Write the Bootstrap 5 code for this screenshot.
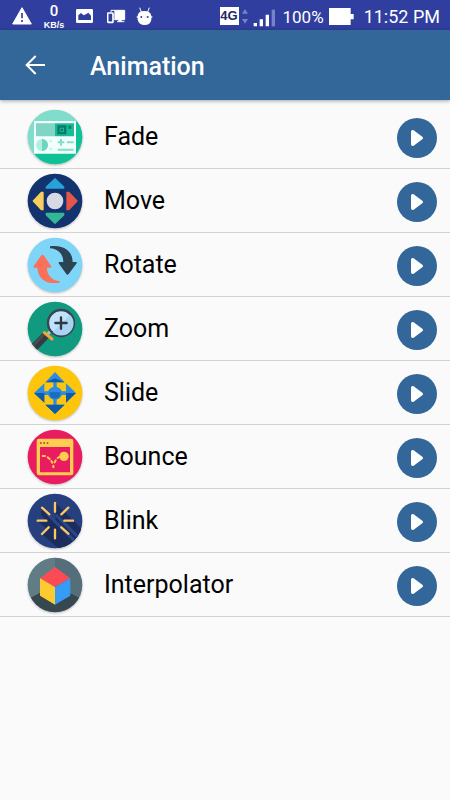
<!DOCTYPE html>
<html lang="en">
<head>
<meta charset="utf-8">
<meta name="viewport" content="width=device-width, initial-scale=1">
<title>Animation</title>
<link href="https://cdn.jsdelivr.net/npm/bootstrap@5.3.0/dist/css/bootstrap.min.css" rel="stylesheet">
<style>
body { background: #fafafa; color: #000; font-family: Roboto, "Liberation Sans", sans-serif; }
svg { display: block; flex: none; }
.status-bar { height: 30px; padding: 2px 10px 0 12px; background: #303f9f; color: #fff; font-size: 18px; line-height: 28px; }
.notices { gap: 10px; }
.net-speed { width: 24px; font-family: "Liberation Sans", sans-serif; font-weight: 700; font-size: 9px; line-height: 10px; }
.net-speed b { display: block; font-family: Roboto, sans-serif; font-weight: 500; font-size: 15px; line-height: 17px; }
.charge { font-size: 17px; margin: 0 5px 0 7px; padding-top: 1px; }
.clock { margin-left: 10px; padding-top: 1px; }
.net-type { width: 19px; height: 18px; background: #fff; color: #1f2a63; font: 700 13px/18px "Liberation Sans", sans-serif; margin-right: 2px; }
.app-bar { height: 70px; padding: 0 21px; background: #336699; color: #fff; box-shadow: 0 1px 4px rgba(0,0,0,.35); }
.app-bar h1 { font-size: 25px; line-height: 32px; font-weight: 500; margin-left: 41px; padding-top: 4px; }
.effects { padding-top: 5px; }
.effect { height: 64px; padding: 1px 13px 0 27px; border-bottom: 1px solid #d3d3d3; }
.effect a { font-size: 25px; line-height: 32px; margin-left: 21px; color: #000; }
.badge-art { border-radius: 50%; filter: drop-shadow(0 1px 1px rgba(0,0,0,.25)); }
.play { width: 40px; height: 40px; margin-top: 2px; background: #336699; border-radius: 50%; }
.play:hover { background: #2b5985; }
</style>
</head>
<body>
<div class="status-bar d-flex align-items-center justify-content-between">
  <div class="notices d-flex align-items-center">
    <svg width="20" height="20" viewBox="0 0 60 60"><path d="M30 5 58 54H2z" fill="#fff" stroke="#fff" stroke-width="3" stroke-linejoin="round"/><path d="M30 21v16M30 42v6" stroke="#303f9f" stroke-width="5"/></svg>
    <div class="net-speed text-center"><b>0</b>KB/s</div>
    <svg width="17" height="14" viewBox="0 0 51 42"><rect width="51" height="42" rx="4" fill="#fff"/><path d="M7 33V19l8-7 8 7 8-4 6-4 8 9v13z" fill="#303f9f"/></svg>
    <svg class="ms-1" width="19" height="15" viewBox="0 0 57 45"><path d="M12 10V4h41v28H22M30 38h22" fill="none" stroke="#fff" stroke-width="3"/><path d="M22 4h31v28H22zM34 32h10v7H34z" fill="#fff"/><rect x="2" y="12" width="16" height="28" rx="2" fill="#303f9f" stroke="#fff" stroke-width="5"/></svg>
    <svg width="17" height="19" viewBox="0 0 51 57"><path d="M11 2l5 13M40 2l-5 13" stroke="#fff" stroke-width="3"/><path d="M5 27Q6 12 25 12T46 27V38Q43 54 26 54T5 38z" fill="#fff"/><path d="M2 30h47" stroke="#fff" stroke-width="4"/><circle cx="16" cy="30" r="3" fill="#303f9f"/><circle cx="35" cy="30" r="3" fill="#303f9f"/></svg>
  </div>
  <div class="d-flex align-items-center">
    <span class="net-type text-center">4G</span>
    <svg width="8" height="18" viewBox="0 0 24 54" fill="#7883c7"><path d="M12 6l9 14H3zM12 50l9-14H3z"/></svg>
    <svg class="ms-1 mt-1" width="23" height="18" viewBox="0 0 69 54"><path d="M2 42h10v10H2zM20 31h10v21H20zM38 17h10v35H38z" fill="#fff"/><path d="M56 2h10v50H56z" fill="#7883c7"/></svg>
    <span class="charge">100%</span>
    <svg width="25" height="17" viewBox="0 0 75 51"><path d="M0 0h65v18h9v16h-9v17H0z" fill="#fff"/></svg>
    <time class="clock">11:52 PM</time>
  </div>
</div>

<header class="app-bar d-flex align-items-center position-relative">
  <button class="btn p-1 border-0" type="button" aria-label="Back">
    <svg width="20" height="20" viewBox="0 0 60 60" fill="none" stroke="#fff" stroke-width="6"><path d="M60 30H5M32 3 5 30l27 27"/></svg>
  </button>
  <h1 class="mb-0">Animation</h1>
</header>

<main>
<ul class="effects list-unstyled mb-0">
  <li class="effect d-flex align-items-center">
    <svg class="badge-art" width="56" height="56" viewBox="21 22 168 168">
      <defs><clipPath id="disc1"><circle cx="105" cy="106" r="82"/></clipPath></defs>
      <g clip-path="url(#disc1)"><path d="M21 22h168v168H21z" fill="#80dccb"/><path d="M168 58l21 20v112H74l-32-34z" fill="#10c198"/></g>
      <path d="M42 58h126v98H42z" fill="#f0fffc"/><path d="M48 65h57v39H48z" fill="#80d5c5"/><path d="M105 65h57v39h-57z" fill="#18ba98"/>
      <path d="M112 71h27v27h-27z" fill="#087c6b"/><path d="M119 78h13v13h-13z" fill="#20b397"/><path d="M122 81h7v7h-7zM145 72h9v9h-9z" fill="#087c6b"/>
      <circle cx="66" cy="130" r="18" fill="#b2eee2"/><path d="M66 112a18 18 0 0 1 0 36z" fill="#70d5c0"/>
      <path d="M113 122h20M123 112v20M141 122h20M113 144h48" stroke="#86dcc9" stroke-width="6"/>
      <path d="M88 115h8v7h-8zM88 138h8v7h-8z" fill="#c7f3eb"/>
    </svg>
    <a class="text-decoration-none flex-grow-1" href="#fade">Fade</a>
    <button class="play btn p-0 border-0 d-flex align-items-center justify-content-center" type="button" aria-label="Play Fade"><svg width="14" height="18" viewBox="0 0 42 54"><path d="M8 8v38l26-19z" fill="#fff" stroke="#fff" stroke-width="10" stroke-linejoin="round"/></svg></button>
  </li>
  <li class="effect d-flex align-items-center">
    <svg class="badge-art" width="56" height="56" viewBox="21 16 168 168">
      <circle cx="105" cy="100" r="82" fill="#12336d"/>
      <g stroke-width="4" stroke-linejoin="round"><path d="M105 33l26 25v3H79v-3z" fill="#27a2db" stroke="#27a2db"/><path d="M105 167l26-25v-5H79v5z" fill="#32b894" stroke="#32b894"/><path d="M40 100l24-26h5v52h-5z" fill="#fbcd5e" stroke="#fbcd5e"/><path d="M171 100l-25-26h-5v52h5z" fill="#e35748" stroke="#e35748"/></g>
      <circle cx="105" cy="100" r="25" fill="#d7dae2"/>
    </svg>
    <a class="text-decoration-none flex-grow-1" href="#move">Move</a>
    <button class="play btn p-0 border-0 d-flex align-items-center justify-content-center" type="button" aria-label="Play Move"><svg width="14" height="18" viewBox="0 0 42 54"><path d="M8 8v38l26-19z" fill="#fff" stroke="#fff" stroke-width="10" stroke-linejoin="round"/></svg></button>
  </li>
  <li class="effect d-flex align-items-center">
    <svg class="badge-art" width="56" height="56" viewBox="21 16 168 168">
      <circle cx="105" cy="100" r="82" fill="#7fd5f8"/>
      <path d="M90 44C130 38 158 58 158 91h10q4 1 1 5l-23 31q-3 4-7 0l-22-31q-3-4 2-5h11C130 68 115 51 90 50z" fill="#2b4352"/>
      <path d="M119 153C80 159 54 143 52 108H43q-5-1-2-5l23-32q3-4 7 0l22 32q3 4-2 5H81c0 22 15 39 38 40z" fill="#fb705b"/>
    </svg>
    <a class="text-decoration-none flex-grow-1" href="#rotate">Rotate</a>
    <button class="play btn p-0 border-0 d-flex align-items-center justify-content-center" type="button" aria-label="Play Rotate"><svg width="14" height="18" viewBox="0 0 42 54"><path d="M8 8v38l26-19z" fill="#fff" stroke="#fff" stroke-width="10" stroke-linejoin="round"/></svg></button>
  </li>
  <li class="effect d-flex align-items-center">
    <svg class="badge-art" width="56" height="56" viewBox="21 16 168 168">
      <defs><clipPath id="disc4"><circle cx="105" cy="100" r="82"/></clipPath></defs>
      <circle cx="105" cy="100" r="82" fill="#109b81"/>
      <g clip-path="url(#disc4)"><path d="M31 167l48-50" stroke="#343b43" stroke-width="24"/><path d="M29 161l46-49" stroke="#4b4b53" stroke-width="8"/></g>
      <path d="M83 115l12-12" stroke="#b4c3cd" stroke-width="9"/><path d="M73 111l23 19" stroke="#f3a82d" stroke-width="9" stroke-linecap="round"/>
      <circle cx="123" cy="82" r="39" fill="#bfe3fb" stroke="#3d4350" stroke-width="7"/><path d="M98 109a36 36 0 0 0 52-52z" fill="#a8d4f3"/>
      <path d="M106 82h34M123 65v34" stroke="#303743" stroke-width="7" stroke-linecap="round"/>
    </svg>
    <a class="text-decoration-none flex-grow-1" href="#zoom">Zoom</a>
    <button class="play btn p-0 border-0 d-flex align-items-center justify-content-center" type="button" aria-label="Play Zoom"><svg width="14" height="18" viewBox="0 0 42 54"><path d="M8 8v38l26-19z" fill="#fff" stroke="#fff" stroke-width="10" stroke-linejoin="round"/></svg></button>
  </li>
  <li class="effect d-flex align-items-center">
    <svg class="badge-art" width="56" height="56" viewBox="21 16 168 168">
      <circle cx="105" cy="100" r="82" fill="#fec50d"/>
      <path d="M105 37l29 31h-24v13q12 4 16 14h12V71l30 29-30 29v-23h-12q-4 10-16 14v15h24l-29 28-29-28h24v-15q-12-4-16-14H73v23l-31-29 31-29v24h11q4-10 16-14V68H76z" fill="#2e8be2"/>
      <path d="M76 68l29-12 29 12zM42 100l31 29v-29zM138 100h30l-30 29zM76 135h58l-29 28z" fill="#105ba8"/>
      <path d="M88 98h34q-1 19-17 19t-17-19z" fill="#176dbf"/>
    </svg>
    <a class="text-decoration-none flex-grow-1" href="#slide">Slide</a>
    <button class="play btn p-0 border-0 d-flex align-items-center justify-content-center" type="button" aria-label="Play Slide"><svg width="14" height="18" viewBox="0 0 42 54"><path d="M8 8v38l26-19z" fill="#fff" stroke="#fff" stroke-width="10" stroke-linejoin="round"/></svg></button>
  </li>
  <li class="effect d-flex align-items-center">
    <svg class="badge-art" width="56" height="56" viewBox="21 16 168 168">
      <circle cx="105" cy="100" r="82" fill="#e91c62"/>
      <rect x="50" y="45" width="110" height="110" rx="7" fill="#fecc4f"/><path d="M60 70h90v76H60z" fill="#e91c62"/>
      <path d="M60 58h5M70 58h5M80 58h5" stroke="#a83a35" stroke-width="5"/>
      <path d="M68 97h7M83 101l6 5M94 112l3 5M100 126v5M104 116l3-6M113 103l8-5" stroke="#fecc4f" stroke-width="6" stroke-linecap="round"/>
      <circle cx="132" cy="98" r="14" fill="#fecc4f"/>
    </svg>
    <a class="text-decoration-none flex-grow-1" href="#bounce">Bounce</a>
    <button class="play btn p-0 border-0 d-flex align-items-center justify-content-center" type="button" aria-label="Play Bounce"><svg width="14" height="18" viewBox="0 0 42 54"><path d="M8 8v38l26-19z" fill="#fff" stroke="#fff" stroke-width="10" stroke-linejoin="round"/></svg></button>
  </li>
  <li class="effect d-flex align-items-center">
    <svg class="badge-art" width="56" height="56" viewBox="21 16 168 168">
      <defs><clipPath id="disc7"><circle cx="105" cy="100" r="82"/></clipPath></defs>
      <circle cx="105" cy="100" r="82" fill="#263f7f"/>
      <g clip-path="url(#disc7)"><path d="M66 60l120 120-60 10-60-50 14-16-27-24h26l-16-20zM107 46l82 82v60l-82-82z" fill="#1b2c5e"/><path d="M84 80l84 84M108 82l64 64" stroke="#2b4788" stroke-width="9"/></g>
      <path d="M105 46v26M105 126v26M53 99h26M133 99h26M66 60l22 20M124 119l21 19M145 60l-21 20M86 119l-20 20" stroke="#fbc760" stroke-width="7" stroke-linecap="round"/>
    </svg>
    <a class="text-decoration-none flex-grow-1" href="#blink">Blink</a>
    <button class="play btn p-0 border-0 d-flex align-items-center justify-content-center" type="button" aria-label="Play Blink"><svg width="14" height="18" viewBox="0 0 42 54"><path d="M8 8v38l26-19z" fill="#fff" stroke="#fff" stroke-width="10" stroke-linejoin="round"/></svg></button>
  </li>
  <li class="effect d-flex align-items-center">
    <svg class="badge-art" width="56" height="56" viewBox="21 16 168 168">
      <defs><clipPath id="disc8"><circle cx="105" cy="100" r="82"/></clipPath></defs>
      <g clip-path="url(#disc8)"><path d="M21 16h84v84l-84 43z" fill="#607d86"/><path d="M105 16h84v127l-84-43z" fill="#546e7a"/><path d="M21 143l84-43 84 43v45H21z" fill="#37474f"/></g>
      <path d="M105 46l46 34-46 26-45-26z" fill="#fb4b55"/><path d="M60 80l45 26v53l-45-27z" fill="#fdca30"/><path d="M151 80l-46 26v53l46-27z" fill="#369bf4"/>
    </svg>
    <a class="text-decoration-none flex-grow-1" href="#interpolator">Interpolator</a>
    <button class="play btn p-0 border-0 d-flex align-items-center justify-content-center" type="button" aria-label="Play Interpolator"><svg width="14" height="18" viewBox="0 0 42 54"><path d="M8 8v38l26-19z" fill="#fff" stroke="#fff" stroke-width="10" stroke-linejoin="round"/></svg></button>
  </li>
</ul>
</main>
<script src="https://cdn.jsdelivr.net/npm/bootstrap@5.3.0/dist/js/bootstrap.bundle.min.js"></script>
</body>
</html>
